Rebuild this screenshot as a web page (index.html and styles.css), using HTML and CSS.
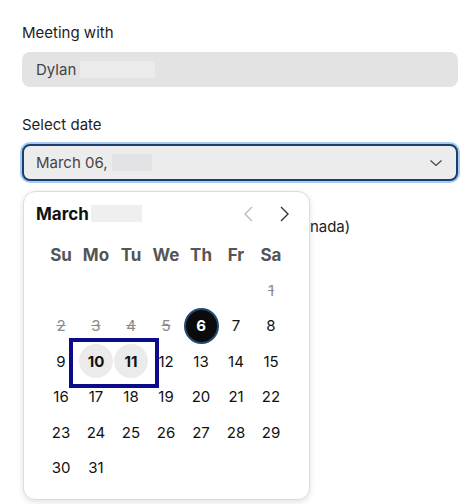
FILE: index.html
```html
<!DOCTYPE html>
<html>
<head>
<meta charset="utf-8">
<link rel="stylesheet" href="styles.css">
</head>
<body>
<div class="form">
  <div class="label">Meeting with</div>
  <div class="input readonly"><span>Dylan</span><span class="blur blur-name"></span></div>

  <div class="label label-date">Select date</div>
  <div class="select-wrap">
    <div class="input select">
      <span>March 06,</span><span class="blur blur-year"></span>
      <svg class="chev" width="14" height="8" viewBox="0 0 14 8"><path d="M1.5 1.5 L7 6.5 L12.5 1.5" fill="none" stroke="#444" stroke-width="1.2"/></svg>
    </div>
    <div class="popup">
      <div class="cal-head">
        <div class="month"><span>March</span><span class="blur blur-month"></span></div>
        <div class="nav">
          <svg width="24" height="24" viewBox="0 0 24 24"><path d="M15 5 L8 12 L15 19" fill="none" stroke="#bbb" stroke-width="1.4"/></svg>
          <svg width="24" height="24" viewBox="0 0 24 24"><path d="M9 5 L16 12 L9 19" fill="none" stroke="#333" stroke-width="1.4"/></svg>
        </div>
      </div>
      <div class="grid">
        <div class="wd">Su</div><div class="wd">Mo</div><div class="wd">Tu</div><div class="wd">We</div><div class="wd">Th</div><div class="wd">Fr</div><div class="wd">Sa</div>
        <div class="d"></div><div class="d"></div><div class="d"></div><div class="d"></div><div class="d"></div><div class="d"></div><div class="d off"><span>1</span></div>
        <div class="d off"><span>2</span></div><div class="d off"><span>3</span></div><div class="d off"><span>4</span></div><div class="d off"><span>5</span></div><div class="d sel"><span>6</span></div><div class="d"><span>7</span></div><div class="d"><span>8</span></div>
        <div class="d"><span>9</span></div><div class="d hl"><span>10</span></div><div class="d hl"><span>11</span></div><div class="d"><span>12</span></div><div class="d"><span>13</span></div><div class="d"><span>14</span></div><div class="d"><span>15</span></div>
        <div class="d"><span>16</span></div><div class="d"><span>17</span></div><div class="d"><span>18</span></div><div class="d"><span>19</span></div><div class="d"><span>20</span></div><div class="d"><span>21</span></div><div class="d"><span>22</span></div>
        <div class="d"><span>23</span></div><div class="d"><span>24</span></div><div class="d"><span>25</span></div><div class="d"><span>26</span></div><div class="d"><span>27</span></div><div class="d"><span>28</span></div><div class="d"><span>29</span></div>
        <div class="d"><span>30</span></div><div class="d"><span>31</span></div>
      </div>
      <div class="annot"></div>
    </div>
  </div>
  <div class="tz">Times shown in Eastern Time (US &amp; Canada)</div>
</div>
</body>
</html>
```

FILE: styles.css
```css
* { box-sizing: border-box; }
html, body { margin: 0; padding: 0; background: #fff; }
body {
  font-family: Inter, "Noto Sans", "Liberation Sans", sans-serif;
  color: #1a1a1a;
  width: 467px;
  height: 504px;
  overflow: hidden;
}
.form {
  padding: 23px 9px 0 22px;
  display: flex;
  flex-direction: column;
}
.label {
  font-size: 15px;
  line-height: 20px;
  color: #1e1e1e;
}
.label-date { margin-top: 28px; }
.input {
  margin-top: 9px;
  height: 35px;
  border-radius: 8px;
  display: flex;
  align-items: center;
  padding-left: 14px;
  font-size: 15px;
  color: #444;
}
.readonly { background: #e3e3e3; }
.blur { display: inline-block; background: #ebebeb; height: 17px; }
.blur-name { width: 75px; margin-left: 4px; }
.blur-year { width: 40px; margin-left: 4px; background: #e3e3e5; }
.blur-month { width: 51px; height: 17px; margin-left: 2px; background: #efefef; }
.select-wrap { position: relative; }
.select {
  height: 37px;
  margin-top: 9px;
  background: #ececec;
  border: 2px solid #1b3e6e;
  box-shadow: 0 0 0 2px #a9caf0;
  padding-left: 12px;
}
.chev { margin-left: auto; margin-right: 13px; }
.tz {
  margin-top: 36px;
  padding-left: 12px;
  font-size: 15px;
  line-height: 20px;
  color: #1e1e1e;
}
.popup {
  position: absolute;
  left: 1px;
  top: 56px;
  width: 287px;
  height: 309px;
  background: #fff;
  border: 1px solid #dcdcdc;
  border-radius: 12px;
  box-shadow: 0 2px 6px rgba(0,0,0,0.12);
  z-index: 2;
}
.cal-head {
  display: flex;
  align-items: center;
  justify-content: space-between;
  padding: 11px 13px 0 12px;
  height: 32px;
}
.month {
  display: flex;
  align-items: center;
  font-size: 17px;
  font-weight: 700;
  color: #111;
}
.nav { display: flex; gap: 11px; }
.nav svg { display: block; }
.grid {
  margin-top: 13px;
  padding-left: 19.5px;
  display: grid;
  grid-template-columns: repeat(7, 35px);
  grid-auto-rows: 35.5px;
}
.wd {
  display: flex;
  align-items: center;
  justify-content: center;
  font-size: 17px;
  font-weight: 700;
  color: #555;
  height: 35px;
}
.d {
  display: flex;
  align-items: center;
  justify-content: center;
  font-size: 15px;
  color: #111;
}
.d span {
  width: 34px;
  height: 34px;
  border-radius: 50%;
  display: flex;
  align-items: center;
  justify-content: center;
}
.off span { color: #8a8a8a; text-decoration: line-through; }
.sel span {
  background: #0b0b0b;
  border: 2px solid #244a74;
  color: #fff;
  font-weight: 700;
  width: 36px;
  height: 36px;
}
.hl span { background: #ebebeb; font-weight: 700; }
.annot {
  position: absolute;
  left: 45px;
  top: 146px;
  width: 90px;
  height: 50px;
  border: 4px solid #0c0c8a;
}
```
